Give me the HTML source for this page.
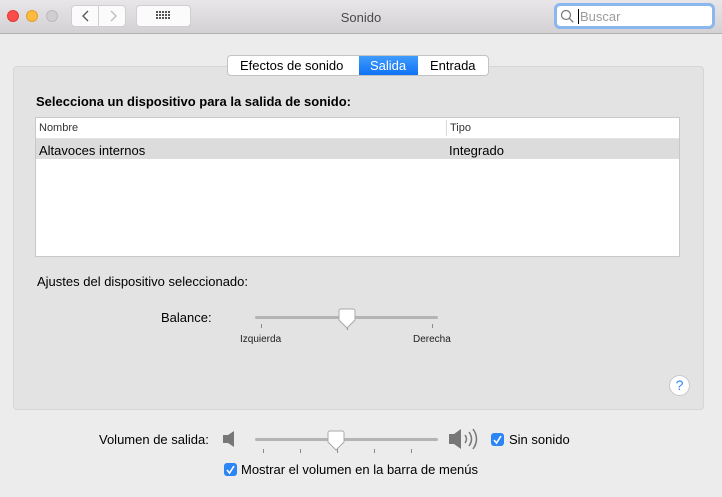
<!DOCTYPE html>
<html><head><meta charset="utf-8"><style>
*{margin:0;padding:0;box-sizing:border-box}
body{width:722px;height:497px;background:#ececec;font-family:"Liberation Sans",sans-serif;font-size:13px;color:#000;position:relative;overflow:hidden}
.a{position:absolute}
.tb{left:0;top:0;width:722px;height:34px;background:linear-gradient(#e8e6e8,#d3d1d3);border-bottom:1px solid #b1b1b1}
.dot{width:12px;height:12px;border-radius:50%;top:10px}
.btn{background:#fbfbfb;border:1px solid #cfcfcf;border-radius:4px;height:22px;top:5px}
.panel{left:13px;top:66px;width:691px;height:344px;background:#e3e3e3;border:1px solid #d6d6d6;border-radius:4px}
.tabs{left:227px;top:55px;width:262px;height:21px;background:#fff;border:1px solid #c3c3c3;border-radius:4px;overflow:hidden;font-size:13px}
.tabs span{position:absolute;top:2px}
.track{height:3px;background:#b4b4b4;border-radius:2px}
.tick{width:1px;height:4px;background:#8a8a8a}
.cb{width:13px;height:13px;border-radius:3px;background:#2b85f7}
</style></head><body>
<div class="a tb"></div>
<div class="a dot" style="left:7px;background:#fc4d4a;border:1px solid #df3a36"></div>
<div class="a dot" style="left:26px;background:#fdbc40;border:1px solid #e09f2b"></div>
<div class="a dot" style="left:46px;background:#cfcfcf;border:1px solid #bbb"></div>
<div class="a btn" style="left:71px;width:28px;border-radius:4px 0 0 4px"></div>
<div class="a btn" style="left:98px;width:28px;border-radius:0 4px 4px 0"></div>
<svg class="a" style="left:71px;top:5px" width="56" height="22"><path d="M17 6l-5 5 5 5" stroke="#555" stroke-width="1.3" fill="none"/><path d="M40 6l5 5-5 5" stroke="#bbb" stroke-width="1.3" fill="none"/></svg>
<div class="a btn" style="left:136px;width:55px"></div>
<svg class="a" style="left:156px;top:11px" width="16" height="10"><g fill="#555"><rect x="0" y="0" width="2" height="2"/><rect x="3" y="0" width="2" height="2"/><rect x="6" y="0" width="2" height="2"/><rect x="9" y="0" width="2" height="2"/><rect x="12" y="0" width="2" height="2"/><rect x="0" y="3" width="2" height="2"/><rect x="3" y="3" width="2" height="2"/><rect x="6" y="3" width="2" height="2"/><rect x="9" y="3" width="2" height="2"/><rect x="12" y="3" width="2" height="2"/><rect x="0" y="6" width="2" height="2"/><rect x="3" y="6" width="2" height="2"/><rect x="6" y="6" width="2" height="2"/><rect x="9" y="6" width="2" height="2"/><rect x="12" y="6" width="2" height="2"/></g></svg>
<div class="a" style="left:0;width:722px;top:10px;text-align:center;color:#4a4a4a">Sonido</div>
<div class="a" style="left:554px;top:3px;width:161px;height:26px;border-radius:6px;background:#fff;border:3px solid #8ab7ee"></div>
<svg class="a" style="left:560px;top:9px" width="16" height="16"><circle cx="6" cy="6" r="4.5" stroke="#777" stroke-width="1.2" fill="none"/><path d="M9.3 9.3l4 4" stroke="#777" stroke-width="1.3"/></svg>
<div class="a" style="left:578px;top:9px;width:1px;height:15px;background:#000"></div>
<div class="a" style="left:580px;top:9px;color:#9b9b9b">Buscar</div>

<div class="a panel"></div>
<div class="a tabs">
<span style="left:12px">Efectos de sonido</span>
<div class="a" style="left:131px;top:0;width:59px;height:21px;background:linear-gradient(#3f9cfc,#0a6ef4)"></div>
<span style="left:142px;color:#fff">Salida</span>
<span style="left:202px">Entrada</span>
</div>
<div class="a" style="left:36px;top:94px;font-weight:bold">Selecciona un dispositivo para la salida de sonido:</div>
<div class="a" style="left:35px;top:117px;width:645px;height:140px;background:#fff;border:1px solid #c8c8c8"></div>
<div class="a" style="left:36px;top:138px;width:643px;height:1px;background:#e2e2e2"></div>
<div class="a" style="left:446px;top:120px;width:1px;height:16px;background:#d8d8d8"></div>
<div class="a" style="left:39px;top:122px;font-size:11px;color:#333">Nombre</div>
<div class="a" style="left:450px;top:122px;font-size:11px;color:#333">Tipo</div>
<div class="a" style="left:36px;top:139px;width:643px;height:20px;background:#dcdcdc"></div>
<div class="a" style="left:39px;top:143px">Altavoces internos</div>
<div class="a" style="left:449px;top:143px">Integrado</div>

<div class="a" style="left:37px;top:274px">Ajustes del dispositivo seleccionado:</div>
<div class="a" style="left:161px;top:310px">Balance:</div>
<div class="a track" style="left:255px;top:316px;width:183px"></div>
<div class="a tick" style="left:261px;top:324px"></div>
<div class="a tick" style="left:432px;top:324px"></div>
<div class="a tick" style="left:347px;top:326px"></div>
<svg class="a" style="left:338px;top:308px" width="19" height="22"><path d="M3 1h12a2 2 0 0 1 2 2v9l-8 8-8-8V3a2 2 0 0 1 2-2z" fill="#fff" stroke="#aaa"/></svg>
<div class="a" style="left:240px;top:334px;font-size:10px;color:#222">Izquierda</div>
<div class="a" style="left:413px;top:334px;font-size:10px;color:#222">Derecha</div>
<div class="a" style="left:669px;top:375px;width:21px;height:21px;border-radius:50%;background:#fff;border:1px solid #c8c8c8;text-align:center;color:#2b85f7;font-size:14px;line-height:19px">?</div>

<div class="a" style="left:99px;top:432px">Volumen de salida:</div>
<svg class="a" style="left:222px;top:430px" width="16" height="18"><path d="M1 5h5l6-4v16l-6-4H1z" fill="#777"/></svg>
<div class="a track" style="left:255px;top:438px;width:183px"></div>
<div class="a tick" style="left:263px;top:449px"></div>
<div class="a tick" style="left:300px;top:449px"></div>
<div class="a tick" style="left:337px;top:449px"></div>
<div class="a tick" style="left:374px;top:449px"></div>
<div class="a tick" style="left:411px;top:449px"></div>
<svg class="a" style="left:327px;top:430px" width="19" height="22"><path d="M3 1h12a2 2 0 0 1 2 2v9l-8 8-8-8V3a2 2 0 0 1 2-2z" fill="#fff" stroke="#aaa"/></svg>
<svg class="a" style="left:448px;top:426px" width="34" height="26"><path d="M1 8h5l7-5v20l-7-5H1z" fill="#777"/><path d="M17 9q3 4 0 8M21 6q5 7 0 14M25 3q7 10 0 20" stroke="#777" stroke-width="1.5" fill="none"/></svg>
<div class="a cb" style="left:491px;top:433px"></div>
<svg class="a" style="left:491px;top:433px" width="13" height="13"><path d="M3 7l2.5 3L10 3" stroke="#fff" stroke-width="1.6" fill="none"/></svg>
<div class="a" style="left:509px;top:432px">Sin sonido</div>
<div class="a cb" style="left:224px;top:463px"></div>
<svg class="a" style="left:224px;top:463px" width="13" height="13"><path d="M3 7l2.5 3L10 3" stroke="#fff" stroke-width="1.6" fill="none"/></svg>
<div class="a" style="left:241px;top:462px">Mostrar el volumen en la barra de menús</div>
</body></html>
